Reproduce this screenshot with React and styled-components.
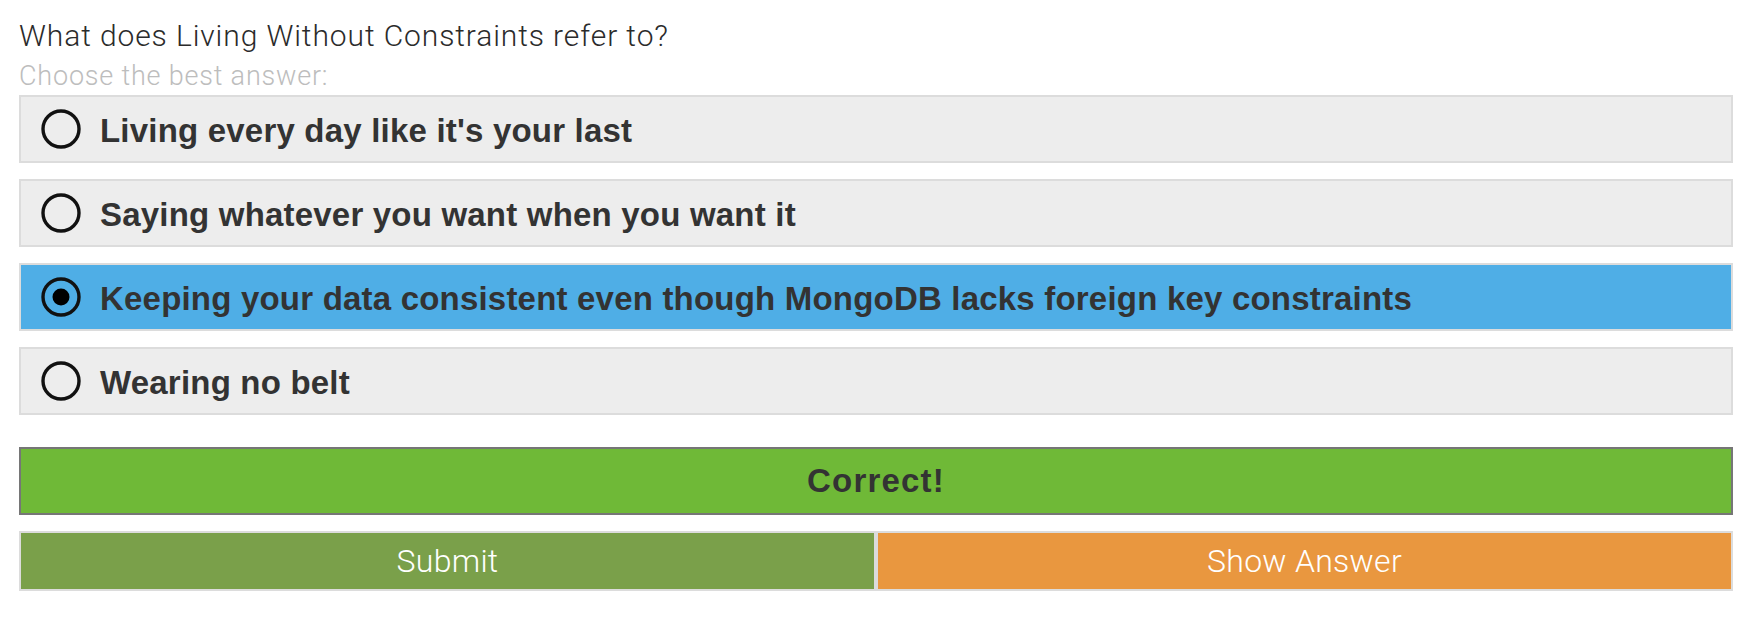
import React, { useState } from "react";
import styled, { createGlobalStyle } from "styled-components";

const Global = createGlobalStyle`
  html, body { margin: 0; padding: 0; background: #fff; }
  body { font-family: "Liberation Sans", Arial, sans-serif; }
`;

const Page = styled.div`
  padding: 16px 31px 0 19px;
`;

const Title = styled.div`
  font-family: Roboto, "Liberation Sans", sans-serif;
  font-weight: 300;
  font-size: 30px;
  letter-spacing: 0.9px;
  line-height: 40px;
  color: #2b2b2b;
`;

const Subtitle = styled.div`
  font-family: Roboto, "Liberation Sans", sans-serif;
  font-weight: 300;
  font-size: 27px;
  letter-spacing: 0.8px;
  line-height: 32px;
  margin-top: 4px;
  color: #bdbdbd;
`;

const Options = styled.div`
  display: flex;
  flex-direction: column;
  gap: 16px;
  margin-top: 3px;
`;

const Option = styled.label`
  box-sizing: border-box;
  height: 68px;
  display: flex;
  align-items: center;
  gap: 19px;
  padding-left: 20px;
  border: 2px solid #dcdcdc;
  background: ${(p) => (p.$selected ? "#4faee6" : "#ededed")};
  cursor: pointer;
`;

const OptionText = styled.span`
  font-family: "Liberation Sans", Arial, sans-serif;
  font-weight: 700;
  font-size: 33px;
  letter-spacing: 0.2px;
  padding-top: 3px;
  color: #333;
`;

const Radio = ({ checked }) => (
  <svg width="40" height="40" viewBox="0 0 40 40">
    <circle cx="20" cy="20" r="18" fill="none" stroke="#111" strokeWidth="3.4" />
    {checked && <circle cx="20" cy="20" r="8.5" fill="#000" />}
  </svg>
);

const Feedback = styled.div`
  box-sizing: border-box;
  margin-top: 32px;
  height: 68px;
  display: flex;
  align-items: center;
  justify-content: center;
  border: 2px solid #767676;
  background: #6fb937;
  font-family: "Liberation Sans", Arial, sans-serif;
  font-weight: 700;
  font-size: 33px;
  letter-spacing: 1.2px;
  color: #333;
`;

const ButtonRow = styled.div`
  display: flex;
  margin-top: 16px;
`;

const Button = styled.button`
  flex: 1;
  box-sizing: border-box;
  height: 60px;
  margin: 0;
  padding: 0;
  border: 2px solid #dcdcdc;
  background: ${(p) => p.$bg};
  color: #fff;
  font-family: Roboto, "Liberation Sans", sans-serif;
  font-weight: 300;
  font-size: 32px;
  letter-spacing: 0.3px;
  cursor: pointer;
`;

const answers = [
  "Living every day like it's your last",
  "Saying whatever you want when you want it",
  "Keeping your data consistent even though MongoDB lacks foreign key constraints",
  "Wearing no belt",
];

export default function App() {
  const [selected, setSelected] = useState(2);
  return (
    <Page>
      <Global />
      <Title>What does Living Without Constraints refer to?</Title>
      <Subtitle>Choose the best answer:</Subtitle>
      <Options>
        {answers.map((a, i) => (
          <Option key={i} $selected={i === selected} onClick={() => setSelected(i)}>
            <Radio checked={i === selected} />
            <OptionText>{a}</OptionText>
          </Option>
        ))}
      </Options>
      <Feedback>Correct!</Feedback>
      <ButtonRow>
        <Button $bg="#7aa04a">Submit</Button>
        <Button $bg="#e9973f">Show Answer</Button>
      </ButtonRow>
    </Page>
  );
}
